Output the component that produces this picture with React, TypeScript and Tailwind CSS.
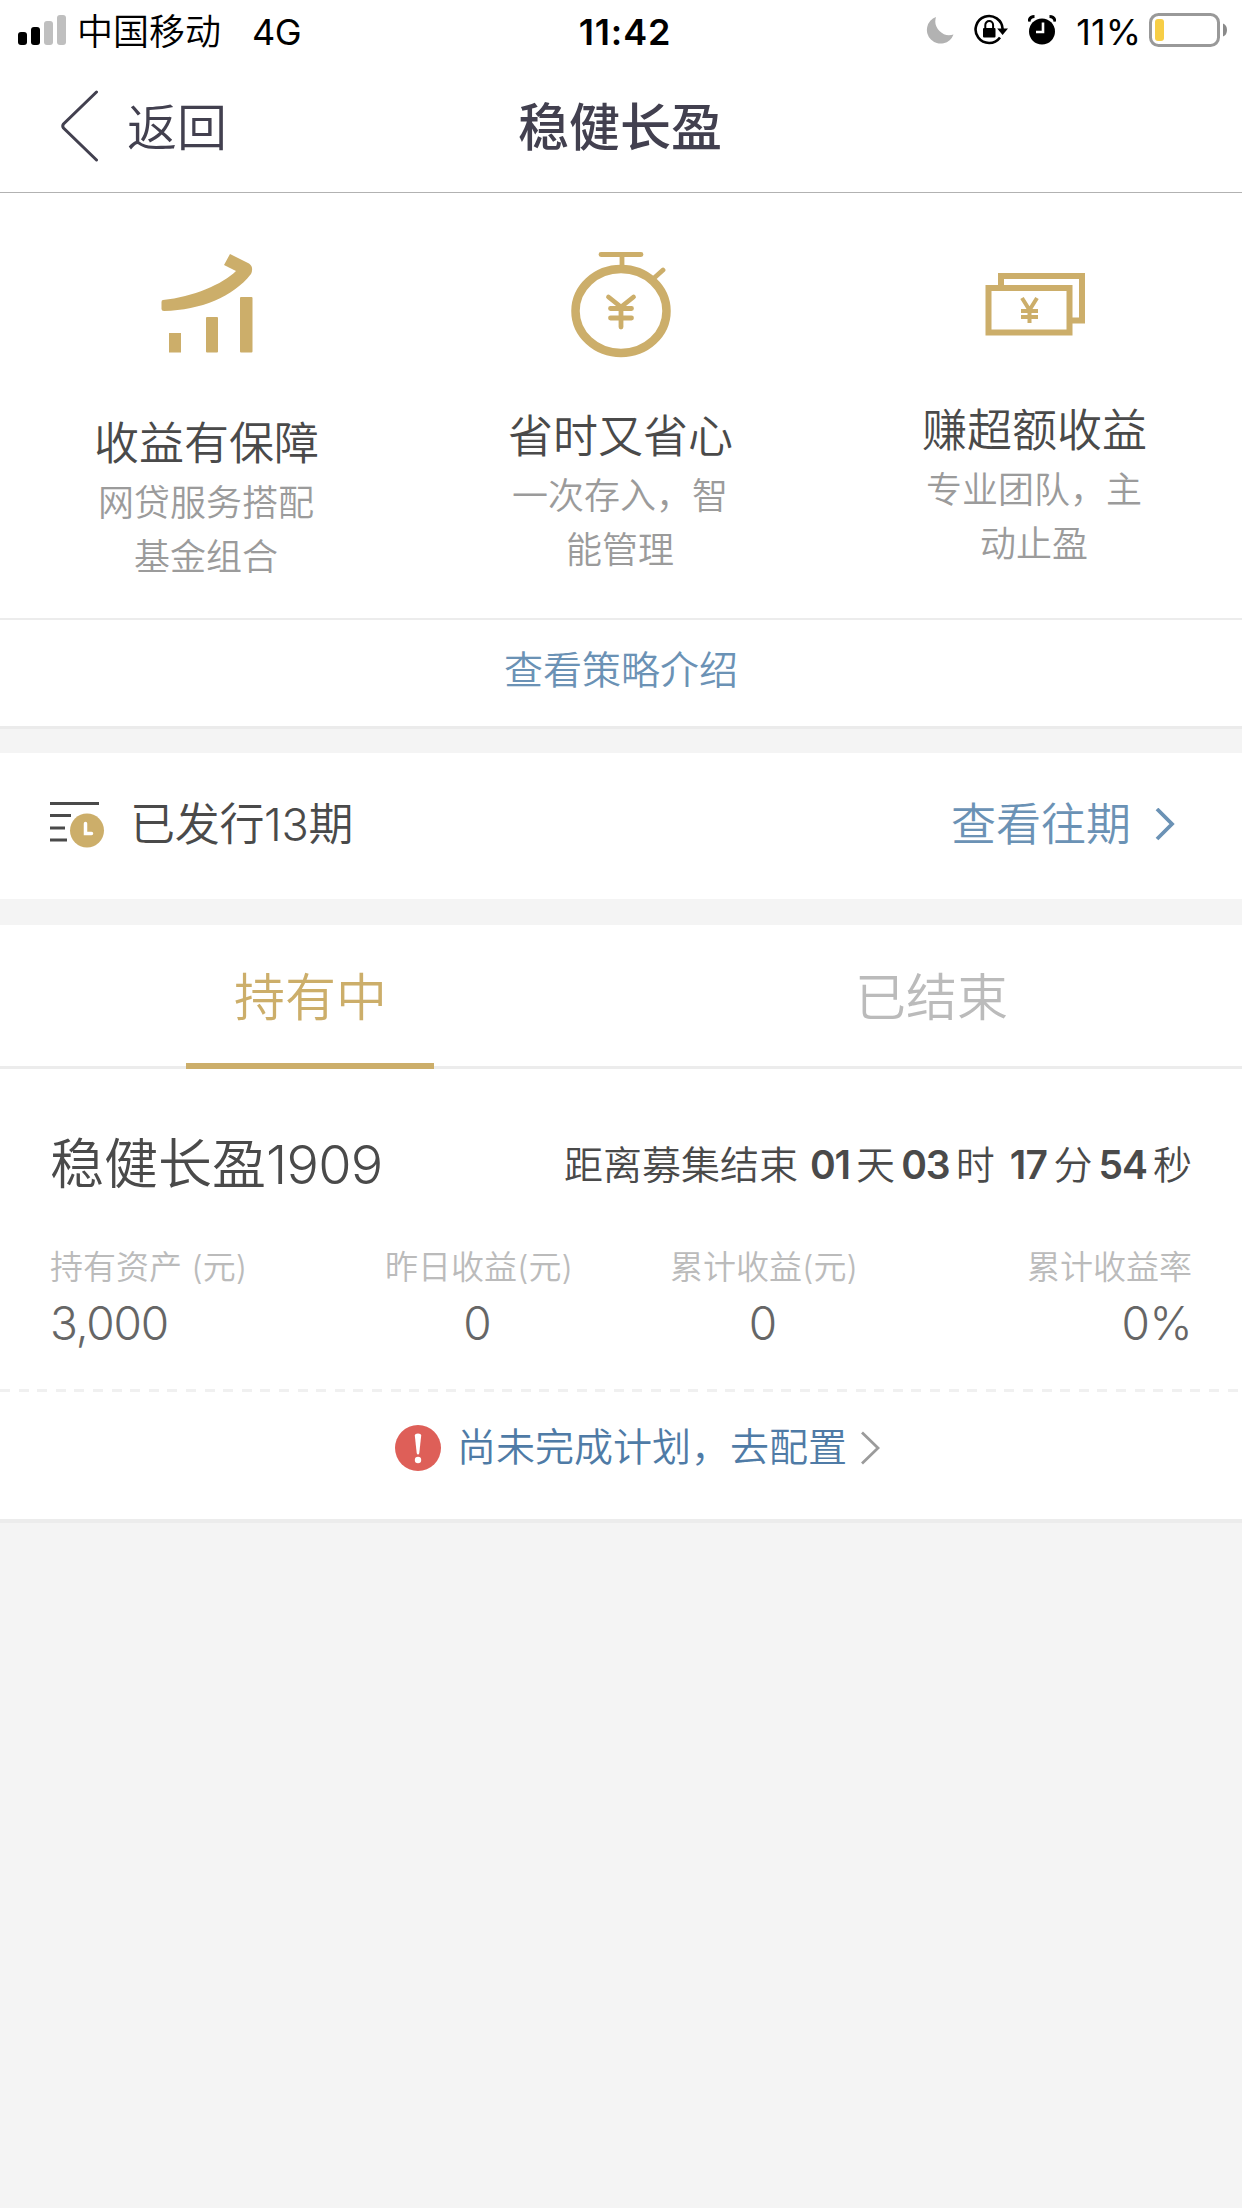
import React, { useState } from "react";

const GOLD = "#ccae6a";

const StatusBar: React.FC = () => (
  <div className="flex h-[60px] items-center font-normal text-black">
    <div className="flex flex-1 items-center pl-[18px]">
      <div className="flex h-[30px] items-end gap-[4px]">
        <span className="h-[13px] w-[9px] rounded-[3px] bg-black" />
        <span className="h-[18px] w-[9px] rounded-[3px] bg-black" />
        <span className="h-[24px] w-[9px] rounded-[3px] bg-[#bfbfbf]" />
        <span className="h-[30px] w-[9px] rounded-[3px] bg-[#bfbfbf]" />
      </div>
      <span className="ml-[11px] pt-[4px] text-[36px] font-[350] leading-[56px]">中国移动</span>
      <span className="ml-[31px] pt-[4px] text-[36px] leading-[56px] tracking-[-0.5px]">4G</span>
    </div>
    <span className="pl-[3px] pt-[4px] text-[36px] font-semibold leading-[56px] tracking-[0.8px]">
      11:42
    </span>
    <div className="flex flex-1 items-center justify-end pr-[13px]">
      <svg width="28" height="27" viewBox="0 0 28 27">
        <path d="M10 0A14 14 0 0 0 27.500 17.500A13.700 13.700 0 1 1 10 0Z" fill="#b2b2b2" />
      </svg>
      <svg className="ml-[20px]" width="34" height="32" viewBox="0 0 34 32" fill="none">
        <path d="M26 23.500A13.500 13.500 0 1 1 28.600 15" stroke="#000" strokeWidth="2.600" />
        <path d="M23.200 14.500H34L28.600 21Z" fill="#000" />
        <rect x="9" y="14" width="12.500" height="9.500" rx="1" fill="#000" />
        <path d="M11.300 15v-4a3.900 3.900 0 0 1 7.800 0V15" stroke="#000" strokeWidth="2" />
      </svg>
      <svg className="ml-[20px]" width="28" height="30" viewBox="0 0 28 30">
        <circle cx="14" cy="16.500" r="13" fill="#000" />
        <path d="M1 6.500Q1.500 1.500 6.500 1.500M27 6.500Q26.500 1.500 21.500 1.500" stroke="#000" strokeWidth="3" fill="none" />
        <path d="M15 7.500v9.500H8" stroke="#fff" strokeWidth="2.600" fill="none" />
      </svg>
      <span className="ml-[20px] pt-[4px] text-[36px] leading-[56px]">11%</span>
      <svg className="ml-[8px]" width="80" height="34" viewBox="0 0 80 34">
        <rect x="1.500" y="1.500" width="68" height="31" rx="8" fill="none" stroke="#999" strokeWidth="3" />
        <rect x="6" y="6" width="9" height="22" rx="3" fill="#f7ce46" />
        <path d="M74 10.500Q78 12 78 17Q78 22 74 23.500Z" fill="#8a8a8a" />
      </svg>
    </div>
  </div>
);

const GrowthIcon: React.FC = () => (
  <svg width="92" height="100" viewBox="0 0 92 100" fill={GOLD}>
    <rect x="8" y="79" width="12" height="19.500" />
    <rect x="45" y="63" width="12" height="35.500" rx="1" />
    <rect x="79" y="43" width="12.500" height="55.500" rx="1" />
    <path d="M2 46C32 43 62 30 75 17L63 11L69 0L88 9.500Q93 13 90 20C72 43 40 56 3 57Q0.500 57 0.500 55V48Q0.500 46 2 46Z" />
  </svg>
);

const StopwatchIcon: React.FC = () => (
  <svg width="100" height="106" viewBox="0 0 100 106" fill="none" stroke={GOLD} strokeLinecap="round">
    <ellipse cx="50" cy="59" rx="45.500" ry="42" strokeWidth="8.500" />
    <path d="M30 2.500H70M51 3V14M82 27L92 18" strokeWidth="4.800" />
    <path d="M37.500 45L50 55L62.500 45M50 55V75M39.500 56.500H60.500M39.500 66H60.500" strokeWidth="4.800" />
  </svg>
);

const CashIcon: React.FC = () => (
  <svg width="100" height="64" viewBox="0 0 100 64" fill="none" stroke={GOLD}>
    <path d="M16 13V3H97V47.500H87" strokeWidth="6" />
    <rect x="3.500" y="15" width="81" height="44.500" strokeWidth="6" />
    <path d="M37 25L44.500 37L52 25M44.500 37V50M36 38H53M36 44H53" strokeWidth="4" />
  </svg>
);

const features = [
  {
    icon: <GrowthIcon />,
    pad: "pt-[61px]",
    gap: "mt-[60px]",
    title: "收益有保障",
    lines: ["网贷服务搭配", "基金组合"],
  },
  {
    icon: <StopwatchIcon />,
    pad: "pt-[59px]",
    gap: "mt-[49px]",
    title: "省时又省心",
    lines: ["一次存入，智", "能管理"],
  },
  {
    icon: <CashIcon />,
    pad: "pt-[80px]",
    gap: "mt-[64px]",
    title: "赚超额收益",
    lines: ["专业团队，主", "动止盈"],
  },
];

const App: React.FC = () => {
  const [tab, setTab] = useState("holding");

  const tabs = [
    { id: "holding", label: "持有中" },
    { id: "ended", label: "已结束" },
  ];

  return (
    <div className="min-h-[2208px] w-[1242px] bg-[#f4f4f4] font-['Inter','Noto_Sans_CJK_SC',sans-serif] font-[350] text-[#4a4a4a]">
      <header className="h-[193px] border-b border-[#b2b2b2] bg-white">
        <StatusBar />
        <div className="grid h-[132px] grid-cols-3 items-center text-[#42404f]">
          <button className="flex items-center pl-[61px]">
            <svg width="38" height="72" viewBox="0 0 38 72" fill="none">
              <path
                d="M35.500 2L2.500 34Q1 36 2.500 38L35.500 70"
                stroke="currentColor"
                strokeWidth="3"
                strokeLinecap="round"
              />
            </svg>
            <span className="ml-[28px] pt-[3px] text-[50px] leading-[70px]">返回</span>
          </button>
          <h1 className="pr-[2px] pt-[3px] text-center text-[51px] font-medium leading-[70px]">
            稳健长盈
          </h1>
        </div>
      </header>

      {/* selling points */}
      <section className="bg-white">
        <div className="grid h-[427px] grid-cols-3 border-b-2 border-[#ececec]">
          {features.map((item) => (
            <div key={item.title} className={`flex flex-col items-center ${item.pad}`}>
              {item.icon}
              <p className={`pr-px text-[45px] leading-[60px] ${item.gap}`}>{item.title}</p>
              <div className="mt-[2px] pr-[2px] text-center text-[36px] leading-[54px] text-[#9b9b9b]">
                {item.lines.map((line) => (
                  <p key={line}>{line}</p>
                ))}
              </div>
            </div>
          ))}
        </div>
        <a className="flex h-[109px] items-center justify-center border-b-3 border-[#ebebeb] pb-[5px] text-[39px] text-[#6b92b5]">
          查看策略介绍
        </a>
      </section>

      <section className="mt-[24px] flex h-[146px] items-center bg-white pb-[3px] pl-[50px] pr-[67px]">
        <svg width="55" height="46" viewBox="0 0 55 46" fill="none">
          <path d="M0 1.500H49M0 13.500H21M0 26H15M0 38H17" stroke="#4a4a4a" strokeWidth="3" />
          <circle cx="37" cy="28.500" r="17" fill={GOLD} />
          <path d="M35.500 21.500V31.500H41.500" stroke="#fff" strokeWidth="3.500" strokeLinecap="round" />
        </svg>
        <span className="ml-[25px] text-[45px] tracking-[-0.3px]">已发行13期</span>
        <a className="ml-auto flex items-center text-[45px] text-[#6b92b5]">
          查看往期
          <svg className="ml-[24px]" width="20" height="34" viewBox="0 0 20 34" fill="none">
            <path d="M2 1L17 16L2 31" stroke="currentColor" strokeWidth="3.800" />
          </svg>
        </a>
      </section>

      <section className="mt-[26px] border-b-4 border-[#ececec] bg-white">
        <div className="grid h-[144px] grid-cols-2 border-b-3 border-[#ececec] text-[51px]">
          {tabs.map((item) => (
            <button
              key={item.id}
              onClick={() => setTab(item.id)}
              className={`-mb-[3px] flex flex-col items-center justify-between pr-px pt-[35px] ${
                tab === item.id ? "text-[#ccae6a]" : "text-[#bbbbbb]"
              }`}
            >
              <span className="pl-px leading-[76px]">{item.label}</span>
              {tab === item.id && <span className="h-[6px] w-[248px] bg-[#ccae6a]" />}
            </button>
          ))}
        </div>

        <div className="flex h-[320px] flex-col px-[50px] pt-[58px]">
          <div className="flex items-center justify-between">
            <h2 className="text-[54px] leading-[76px]">
              稳健长盈<span className="tracking-[-0.8px]">1909</span>
            </h2>
            <p className="flex text-[39px] leading-[76px]">
              <span>距离募集结束</span>
              <b className="ml-[12px] font-semibold tracking-[-1px]">01</b>
              <span className="ml-[6px]">天</span>
              <b className="ml-[6px] font-semibold tracking-[-1px]">03</b>
              <span className="ml-[6px]">时</span>
              <b className="ml-[15px] font-semibold tracking-[-0.6px]">17</b>
              <span className="ml-[6px]">分</span>
              <b className="ml-[6px] font-semibold tracking-[-1px]">54</b>
              <span className="ml-[6px]">秒</span>
            </p>
          </div>

          <div className="mt-[37px] flex text-[33px] leading-[54px] text-[#bbbbbb]">
            <div className="w-[334px]">
              <p>持有资产 (元)</p>
              <p className="text-[46px] leading-[58px] tracking-[-1.2px] text-[#666666]">3,000</p>
            </div>
            <div className="w-[190px] text-center">
              <p className="whitespace-nowrap">昨日收益(元)</p>
              <p className="pr-[3px] text-[46px] leading-[58px] text-[#666666]">0</p>
            </div>
            <div className="ml-[95px] w-[190px] text-center">
              <p className="whitespace-nowrap">累计收益(元)</p>
              <p className="pr-[2px] text-[46px] leading-[58px] text-[#666666]">0</p>
            </div>
            <div className="ml-auto text-right">
              <p>累计收益率</p>
              <p className="text-[46px] leading-[58px] tracking-[-0.5px] text-[#666666]">0%</p>
            </div>
          </div>
        </div>

        <div className="h-[3px] bg-[repeating-linear-gradient(90deg,#f0f0f0_0px,#f0f0f0_10px,transparent_10px,transparent_18.6px)]" />

        <a className="flex h-[127px] items-center justify-center pb-[16px] pl-[33px] text-[39px] text-[#4f7ba6]">
          <svg width="46" height="46" viewBox="0 0 46 46">
            <circle cx="23" cy="23" r="23" fill="#de5f58" />
            <path d="M19.800 10.500Q20 8.500 23 8.500Q26 8.500 26.200 10.500L24.300 28Q24 29.500 23 29.500Q22 29.500 21.700 28Z" fill="#fff" />
            <circle cx="23" cy="35" r="3.200" fill="#fff" />
          </svg>
          <span className="ml-[16px]">尚未完成计划，去配置</span>
          <svg className="ml-[13px]" width="20" height="34" viewBox="0 0 20 34" fill="none">
            <path d="M2 1.500L18 17L2 32.500" stroke="#9b9b9b" strokeWidth="2.800" />
          </svg>
        </a>
      </section>
    </div>
  );
};

export default App;
